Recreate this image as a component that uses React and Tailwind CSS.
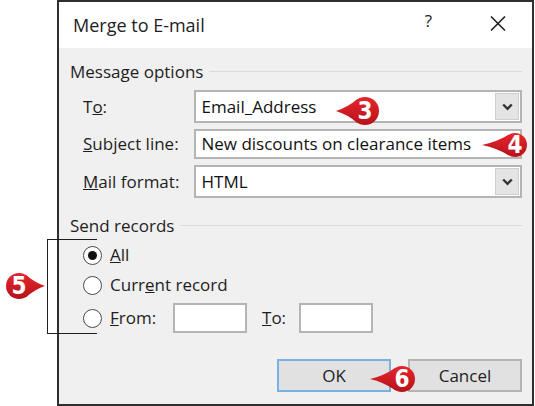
import React from 'react';

const ui = { fontFamily: '"Open Sans", "Noto Sans", sans-serif' };

// Red numbered marker with a pointer, tip sits at (x, y)
const Callout = ({ x, y, n, r = 13, len = 16, flip = false }) => {
  const w = len + r * 2;
  const h = r * 2;
  const cx = len + r;
  const px = cx - r * 0.5;
  const py = r * 0.87;
  return (
    <div
      className="absolute"
      style={{ left: flip ? x - w : x, top: y - r, width: w, height: h }}
    >
      <svg width={w} height={h} viewBox={`0 0 ${w} ${h}`} className={flip ? '-scale-x-100' : ''}>
        <defs>
          <linearGradient id={`cg${n}`} x1="0" y1="0" x2="0" y2="1">
            <stop offset="0" stopColor="#e5262d" />
            <stop offset="1" stopColor="#b8121a" />
          </linearGradient>
        </defs>
        <path
          d={`M0 ${r} Q ${len * 0.7} ${r - 3} ${px} ${r - py} L ${px} ${r + py} Q ${len * 0.7} ${r + 3} 0 ${r} Z`}
          fill={`url(#cg${n})`}
        />
        <circle cx={cx} cy={r} r={r} fill={`url(#cg${n})`} />
      </svg>
      <span
        className="absolute top-0 flex items-center justify-center text-white font-bold text-[24px] leading-none"
        style={{
          left: flip ? 0 : len,
          width: r * 2,
          height: h,
          fontFamily: '"DejaVu Sans Condensed", "Liberation Sans Narrow", "Roboto", sans-serif',
        }}
      >
        {n}
      </span>
    </div>
  );
};

const GroupHeader = ({ label }) => (
  <div className="flex items-center h-[20px]">
    <span className="text-[17px] text-[#1e1e1e] leading-none">{label}</span>
    <div className="flex-1 h-px bg-[#dadada] ml-[6px]" />
  </div>
);

const Chevron = () => (
  <svg width="11" height="8" viewBox="0 0 11 8">
    <path d="M1.2 1.5 L5.5 5.8 L9.8 1.5" fill="none" stroke="#333" strokeWidth="2.4" />
  </svg>
);

const Field = ({ label, value, combo, tall }) => (
  <div className={`flex items-center ${tall ? 'h-[33px]' : 'h-[30px]'}`}>
    <span className="ml-[13px] w-[112px] text-[17px] text-[#1e1e1e]">{label}</span>
    <div className="w-[329px] h-full border-2 border-[#b4b4b4] bg-white flex items-center">
      <span className="flex-1 pl-[5px] text-[17px] text-[#111]">{value}</span>
      {combo && (
        <div className="w-[24px] h-[calc(100%-2px)] mr-px bg-[#e4e4e4] border border-[#cfcfcf] flex items-center justify-center">
          <Chevron />
        </div>
      )}
    </div>
  </div>
);

const Radio = ({ checked, children }) => (
  <div className="flex items-center">
    <div className="w-[19px] h-[19px] rounded-full border-[1.5px] border-[#4a4a4a] bg-white flex items-center justify-center">
      {checked && <div className="w-[9px] h-[9px] rounded-full bg-[#111]" />}
    </div>
    <span className="ml-[8px] text-[17px] text-[#1e1e1e]">{children}</span>
  </div>
);

export default function App() {
  return (
    <div className="relative w-[535px] h-[406px] bg-white overflow-hidden" style={ui}>
      <div className="ml-[57px] w-[477px] h-[406px] border-2 border-[#2e2e2e] flex flex-col">
        {/* title bar */}
        <div className="h-[46px] bg-white flex items-center pl-[14px] pr-[26px]">
          <span className="flex-1 text-[18px] text-[#222]">Merge to E-mail</span>
          <span className="text-[17px] text-[#222] -mt-[8px]">?</span>
          <svg width="16" height="15" viewBox="0 0 16 15" className="ml-[58px] -mt-[4px]">
            <path d="M1 0.5 L15 14.5 M15 0.5 L1 14.5" stroke="#222" strokeWidth="1.6" />
          </svg>
        </div>

        <div className="flex-1 bg-[#f0f0f0] pl-[11px] pr-[10px] pt-[13px] flex flex-col">
          <GroupHeader label="Message options" />
          <div className="mt-[9px]">
            <Field label={<>T<u>o</u>:</>} value="Email_Address" combo tall />
          </div>
          <div className="mt-[6px]">
            <Field label={<><u>S</u>ubject line:</>} value="New discounts on clearance items" />
          </div>
          <div className="mt-[6px]">
            <Field label={<><u>M</u>ail format:</>} value="HTML" combo tall />
          </div>

          <div className="mt-[17px]">
            <GroupHeader label="Send records" />
          </div>
          <div className="ml-[13px] flex flex-col">
            <div className="mt-[5px] h-[30px] flex items-center">
              <Radio checked><u>A</u>ll</Radio>
            </div>
            <div className="h-[30px] flex items-center">
              <Radio>Curr<u>e</u>nt record</Radio>
            </div>
            <div className="mt-[3px] h-[30px] flex items-center">
              <div className="w-[90px]">
                <Radio><u>F</u>rom:</Radio>
              </div>
              <div className="w-[74px] h-full border-2 border-[#b4b4b4] bg-white" />
              <span className="ml-[15px] w-[37px] text-[17px] text-[#1e1e1e]"><u>T</u>o:</span>
              <div className="w-[74px] h-full border-2 border-[#b4b4b4] bg-white" />
            </div>
          </div>

          <div className="mt-[26px] flex justify-end gap-[17px]">
            <button className="w-[114px] h-[33px] bg-[#e1e1e1] border-2 border-[#7db0e2] text-[17px] text-[#1e1e1e]">
              OK
            </button>
            <button className="w-[114px] h-[33px] bg-[#e1e1e1] border-2 border-[#b4b4b4] text-[17px] text-[#1e1e1e]">
              Cancel
            </button>
          </div>
        </div>
      </div>

      {/* bracket around the record choices */}
      <div className="absolute left-[47px] top-[239px] w-[50px] h-[95px] border-y-[1.5px] border-l-[1.5px] border-[#1e1e1e]" />

      <Callout x={336} y={111} n={3} len={15} r={14} />
      <Callout x={482} y={145} n={4} len={21} r={12} />
      <Callout x={45} y={286} n={5} len={13} r={13} flip />
      <Callout x={370} y={379} n={6} len={19} r={13} />
    </div>
  );
}
